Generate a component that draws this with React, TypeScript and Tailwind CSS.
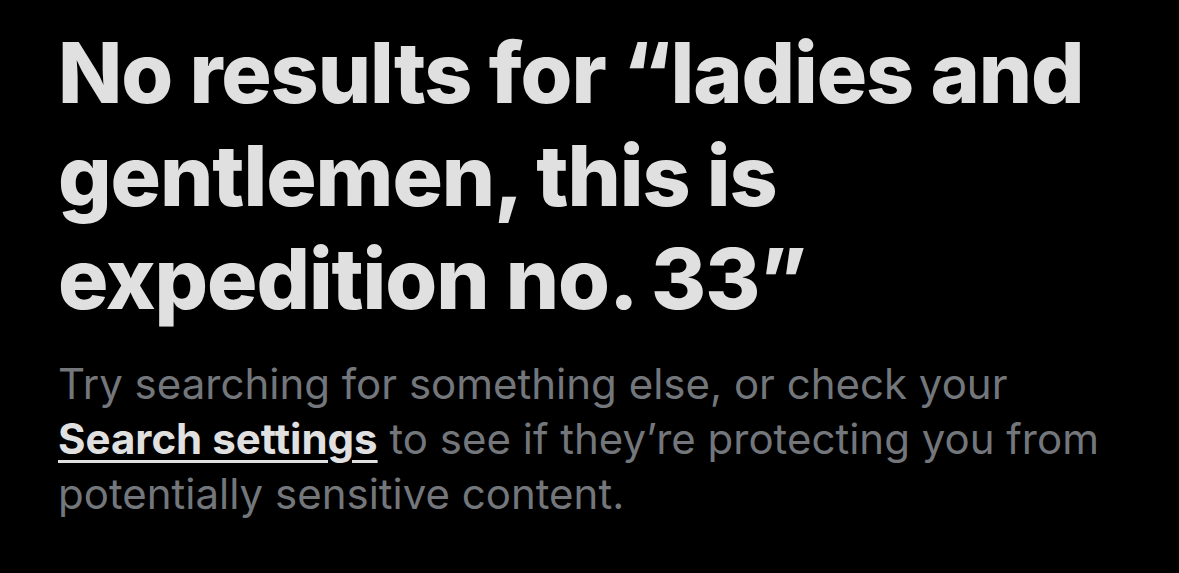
export default function App() {
    return (
        <div className="min-h-[573px] w-full bg-black px-[58px] pt-[21px] font-['Inter',sans-serif]">
            <h1 className="text-[84px] leading-[103px] font-extrabold tracking-[-0.013em] text-[#e0e0e0]">
                No results for “ladies and gentlemen, this is expedition no. 33”
            </h1>
            <p className="mt-[26px] text-[42px] leading-[55px] text-[#73777b]">
                Try searching for something else, or check your{' '}
                <a href="#" className="font-bold whitespace-nowrap text-[#e0e0e0] underline decoration-[3px] underline-offset-[6px]">
                    Search settings
                </a>{' '}
                to see if they’re protecting you from potentially sensitive content.
            </p>
        </div>
    )
}
